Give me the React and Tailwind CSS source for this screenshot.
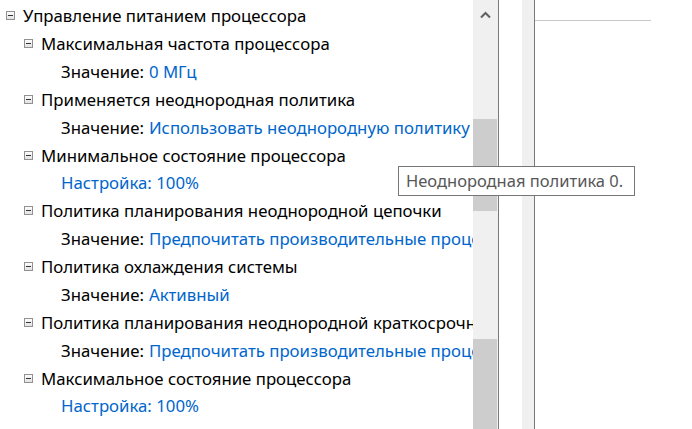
import { Fragment } from "react";

const rows = [
  { level: 0, kind: "node", text: "Управление питанием процессора" },
  { level: 1, kind: "node", text: "Максимальная частота процессора" },
  { level: 2, kind: "value", label: "Значение:", value: "0 МГц" },
  { level: 1, kind: "node", text: "Применяется неоднородная политика" },
  { level: 2, kind: "value", label: "Значение:", value: "Использовать неоднородную политику 0" },
  { level: 1, kind: "node", text: "Минимальное состояние процессора" },
  { level: 2, kind: "link", value: "Настройка: 100%" },
  { level: 1, kind: "node", text: "Политика планирования неоднородной цепочки" },
  { level: 2, kind: "value", label: "Значение:", value: "Предпочитать производительные процессоры" },
  { level: 1, kind: "node", text: "Политика охлаждения системы" },
  { level: 2, kind: "value", label: "Значение:", value: "Активный" },
  { level: 1, kind: "node", text: "Политика планирования неоднородной краткосрочной цепочки" },
  { level: 2, kind: "value", label: "Значение:", value: "Предпочитать производительные процессоры" },
  { level: 1, kind: "node", text: "Максимальное состояние процессора" },
  { level: 2, kind: "link", value: "Настройка: 100%" },
];

// indent per level, in px
const indent = ["pl-[6px]", "pl-[24px]", "pl-[61px]"];

function MinusBox() {
  return (
    <span className="mr-[8px] flex h-[9px] w-[9px] shrink-0 items-center justify-center border border-[#919191] bg-gradient-to-b from-[#fdfdfd] to-[#e2e2e2]">
      <span className="h-px w-[5px] bg-[#333]" />
    </span>
  );
}

function Row({ row }) {
  return (
    <div className={`flex h-[27.86px] items-center whitespace-nowrap ${indent[row.level]}`}>
      {row.kind === "node" && (
        <Fragment>
          <MinusBox />
          <span className="text-black">{row.text}</span>
        </Fragment>
      )}
      {row.kind === "value" && (
        <Fragment>
          <span className="text-black">{row.label}</span>
          <span className="ml-[5px] text-[#0066cc]">{row.value}</span>
        </Fragment>
      )}
      {row.kind === "link" && <span className="text-[#0066cc]">{row.value}</span>}
    </div>
  );
}

export default function App() {
  return (
    <div
      className="relative flex h-[429px] w-[692px] overflow-hidden bg-white text-[16.8px]"
      style={{ fontFamily: '"Noto Sans", "Open Sans", sans-serif' }}
    >
      {/* tree */}
      <div className="w-[473px] shrink-0 overflow-hidden pt-[2px]">
        {rows.map((row, i) => (
          <Row key={i} row={row} />
        ))}
      </div>

      {/* scrollbar */}
      <div className="flex w-[25px] shrink-0 flex-col bg-[#f0f0f0]">
        <div className="flex h-[30px] items-center justify-center">
          <svg width="11" height="8" viewBox="0 0 11 8">
            <path d="M1 6.5 L5.5 2 L10 6.5" fill="none" stroke="#606060" strokeWidth="2" />
          </svg>
        </div>
        <div className="mt-[89px] h-[92px] w-[24px] bg-[#cdcdcd]" />
        <div className="mt-[128px] h-[90px] w-[24px] bg-[#cdcdcd]" />
      </div>

      <div className="w-px shrink-0 bg-[#7a7a7a]" />
      <div className="w-[23px] shrink-0 bg-white" />
      <div className="w-[12px] shrink-0 bg-[#f0f0f0]" />
      <div className="w-px shrink-0 bg-[#7a7a7a]" />

      {/* right pane */}
      <div className="flex-1 pt-[20px]">
        <div className="h-px w-[116px] bg-[#c8c8c8]" />
      </div>

      {/* tooltip */}
      <div className="absolute left-[398px] top-[166px] flex h-[30px] w-[237px] items-center border border-[#767676] bg-white px-[7px] text-[16.5px] text-[#575757]">
        Неоднородная политика 0.
      </div>
    </div>
  );
}
